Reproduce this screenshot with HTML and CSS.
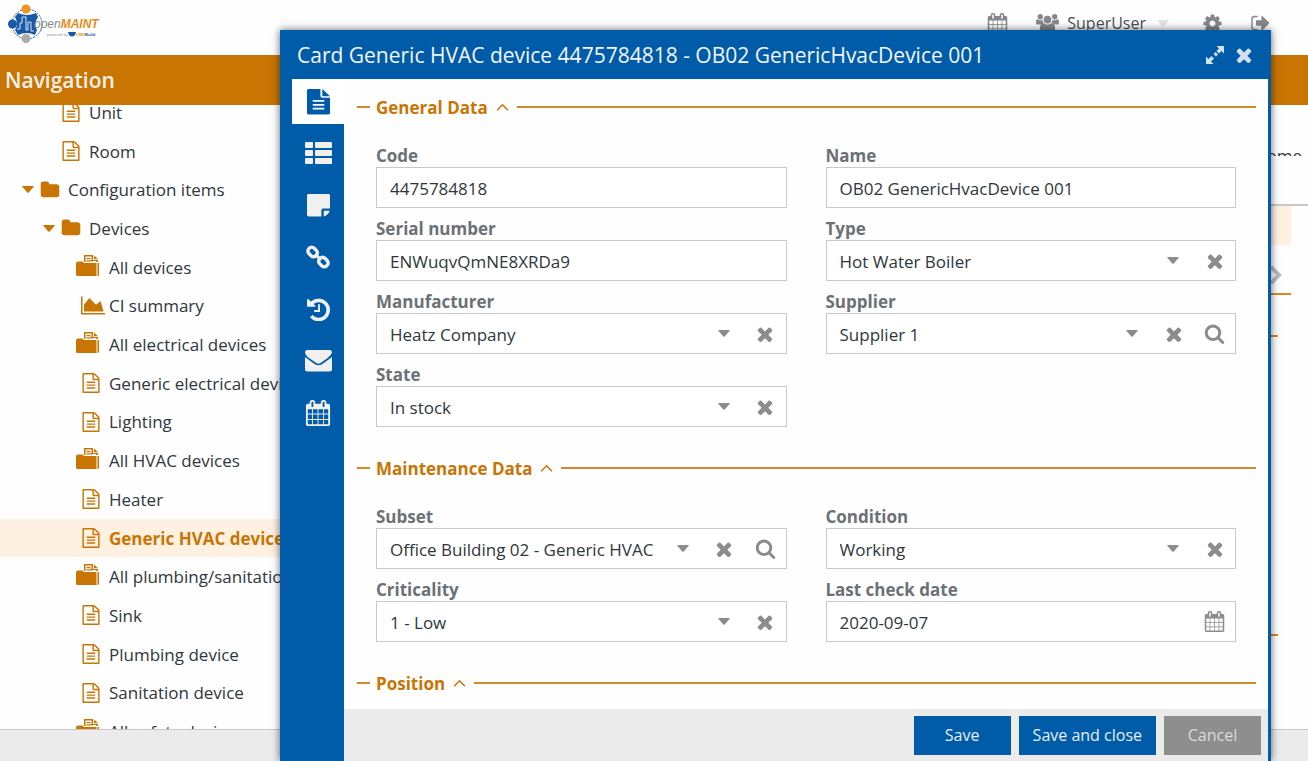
FILE: index.html
```html
<!DOCTYPE html>
<html lang="en">
<head>
  <meta charset="UTF-8" />
  <title>openMAINT</title>
  <link rel="stylesheet" href="styles.css">
</head>
<body>
  <svg class="sprite" aria-hidden="true">
    <symbol id="i-doc" viewBox="0 0 1792 1792"><path d="M1596 380q28 28 48 76t20 88v1152q0 40-28 68t-68 28h-1344q-40 0-68-28t-28-68v-1600q0-40 28-68t68-28h896q40 0 88 20t76 48zm-444-244v376h376q-10-29-22-41l-313-313q-12-12-41-22zm384 1528v-1024h-416q-40 0-68-28t-28-68v-416h-768v1536h1280zm-1024-864q0-14 9-23t23-9h704q14 0 23 9t9 23v64q0 14-9 23t-23 9h-704q-14 0-23-9t-9-23v-64zm736 224q14 0 23 9t9 23v64q0 14-9 23t-23 9h-704q-14 0-23-9t-9-23v-64q0-14 9-23t23-9h704zm0 256q14 0 23 9t9 23v64q0 14-9 23t-23 9h-704q-14 0-23-9t-9-23v-64q0-14 9-23t23-9h704z"/></symbol>
    <symbol id="i-folder" viewBox="0 0 1792 1792"><path d="M1728 608v704q0 92-66 158t-158 66h-1216q-92 0-158-66t-66-158v-960q0-92 66-158t158-66h320q92 0 158 66t66 158v32h672q92 0 158 66t66 158z"/></symbol>
    <symbol id="i-superclass" viewBox="0 0 24 22"><path d="M0 8.500q0-2 2-2h4q1.500 0 1.700 1.500h12.800v13h-19q-1.500 0-1.500-1.500zM21.500 8h1.500v12q0 1-1.500 1zM8 7v-7h9v5h5v2h-1.800v-1h-4.700v-4.500h-6v5.500zM10.500 3h4v1.200h-4zM10.500 5.300h6.500v1.200h-6.500zM18 .5l4 3.800h-4z"/></symbol>
    <symbol id="i-chart" viewBox="0 0 2048 1792"><path d="M2048 1536v128h-2048v-1536h128v1408h1920zm-384-1024l256 896h-1664v-576l448-576 576 576z"/></symbol>
    <symbol id="i-times" viewBox="0 0 1792 1792"><path d="M1490 1322q0 40-28 68l-136 136q-28 28-68 28t-68-28l-294-294-294 294q-28 28-68 28t-68-28l-136-136q-28-28-28-68t28-68l294-294-294-294q-28-28-28-68t28-68l136-136q28-28 68-28t68 28l294 294 294-294q28-28 68-28t68 28l136 136q28 28 28 68t-28 68l-294 294 294 294q28 28 28 68z"/></symbol>
    <symbol id="i-search" viewBox="0 0 1792 1792"><path d="M1216 832q0-185-131.500-316.500t-316.500-131.500-316.500 131.500-131.500 316.500 131.500 316.500 316.500 131.500 316.500-131.500 131.500-316.500zm512 832q0 52-38 90t-90 38q-54 0-90-38l-343-342q-179 124-399 124-143 0-273.500-55.500t-225-150-150-225-55.500-273.500 55.500-273.500 150-225 225-150 273.500-55.500 273.500 55.500 225 150 150 225 55.500 273.500q0 220-124 399l343 343q37 37 37 90z"/></symbol>
    <symbol id="i-calendar" viewBox="0 0 1792 1792"><path d="M192 1664h288v-288h-288v288zm352 0h320v-288h-320v288zm-352-352h288v-320h-288v320zm352 0h320v-320h-320v320zm-352-384h288v-288h-288v288zm736 736h320v-288h-320v288zm-384-736h320v-288h-320v288zm768 736h288v-288h-288v288zm-384-352h320v-320h-320v320zm-352-864v-288q0-13-9.500-22.500t-22.500-9.500h-64q-13 0-22.500 9.500t-9.500 22.500v288q0 13 9.500 22.500t22.500 9.500h64q13 0 22.500-9.500t9.500-22.500zm736 864h288v-320h-288v320zm-384-384h320v-288h-320v288zm384 0h288v-288h-288v288zm32-480v-288q0-13-9.500-22.500t-22.500-9.500h-64q-13 0-22.500 9.500t-9.500 22.500v288q0 13 9.500 22.500t22.500 9.500h64q13 0 22.500-9.500t9.500-22.500zm384-64v1280q0 52-38 90t-90 38h-1408q-52 0-90-38t-38-90v-1280q0-52 38-90t90-38h128v-96q0-66 47-113t113-47h64q66 0 113 47t47 113v96h384v-96q0-66 47-113t113-47h64q66 0 113 47t47 113v96h128q52 0 90 38t38 90z"/></symbol>
    <symbol id="i-cog" viewBox="0 0 1792 1792"><path d="M1152 896q0-106-75-181t-181-75-181 75-75 181 75 181 181 75 181-75 75-181zm512-109v222q0 12-8 23t-20 13l-185 28q-19 54-39 91 35 50 107 138 10 12 10 25t-9 23q-27 37-99 108t-94 71q-12 0-26-9l-138-108q-44 23-91 38-16 136-29 186-7 28-36 28h-222q-14 0-24.500-8.500t-11.500-21.500l-28-184q-49-16-90-37l-141 107q-10 9-25 9-14 0-25-11-126-114-165-168-7-10-7-23 0-12 8-23 15-21 51-66.500t54-70.500q-27-50-41-99l-183-27q-13-2-21-12.500t-8-23.500v-222q0-12 8-23t19-13l186-28q14-46 39-92-40-57-107-138-10-12-10-24 0-10 9-23 26-36 98.500-107.500t94.500-71.500q13 0 26 10l138 107q44-23 91-38 16-136 29-186 7-28 36-28h222q14 0 24.500 8.500t11.500 21.500l28 184q49 16 90 37l142-107q9-9 24-9 13 0 25 10 129 119 165 170 7 8 7 22 0 12-8 23-15 21-51 66.500t-54 70.500q26 50 41 98l183 28q13 2 21 12.500t8 23.500z"/></symbol>
    <symbol id="i-users" viewBox="0 0 24 20"><circle cx="4.500" cy="3.500" r="2.800"/><circle cx="19.500" cy="3.500" r="2.800"/><circle cx="12" cy="6.500" r="4"/><path d="M1 11.500q-1 0-1-2 0-3.500 1.500-3.500 2.500 1.500 5.500.8 0 2.500 1 3.700-2 0-3 1zM23 11.500q1 0 1-2 0-3.500-1.500-3.500-2.500 1.500-5.500.8 0 2.500-1 3.700 2 0 3 1zM7 19q-3 0-3-2.500 0-6.500 4-6.500 2 1.600 4 1.600t4-1.600q4 0 4 6.500 0 2.500-3 2.500z"/></symbol>
    <symbol id="i-signout" viewBox="0 0 20 18"><path d="M7 1.500h-3.500q-2.500 0-2.500 2.500v9q0 2.500 2.500 2.500h3.500" fill="none" stroke="currentColor" stroke-width="1.500"/><path d="M6 5.500h5v-4q0-1 1-.5l7 7q.6.600 0 1.200l-7 6.800q-1 .6-1-.5v-4h-5q-.8 0-.8-.8v-4.400q0-.8.8-.8z"/></symbol>
    <symbol id="i-card" viewBox="0 0 24 27"><path fill-rule="evenodd" d="M2 0h12v7q0 2 2 2h8v16q0 1.500-1.500 1.500h-21q-1.500 0-1.500-1.500v-23.500q0-1.500 2-1.500zM16 0l8 7.500h-8zM6 11.500v1.800h12v-1.800zM6 15.500v1.800h12v-1.800zM6 19.500v1.800h12v-1.800z"/></symbol>
    <symbol id="i-list" viewBox="0 0 27 22"><rect width="8" height="6" rx="1"/><rect x="10" width="17" height="6" rx="1"/><rect y="8" width="8" height="6" rx="1"/><rect x="10" y="8" width="17" height="6" rx="1"/><rect y="16" width="8" height="6" rx="1"/><rect x="10" y="16" width="17" height="6" rx="1"/></symbol>
    <symbol id="i-note" viewBox="0 0 24 24"><path d="M1.500 0h21q1.500 0 1.500 1.500v13.500h-7q-2 0-2 2v6.500h-13.500q-1.500 0-1.500-1.500v-20.500q0-1.500 1.500-1.500zM17.500 17.500h6q0 1.500-1.500 3l-1.500 1.500q-1.500 1.500-3 1.500z"/></symbol>
    <symbol id="i-link" viewBox="0 0 24 24"><g fill="none" stroke="currentColor" stroke-width="3.400"><rect x="-5" y="-3.500" width="10" height="7.500" rx="3.500" transform="translate(6.800 6.800) rotate(45)"/><rect x="-5" y="-4" width="10" height="7.500" rx="3.500" transform="translate(17.200 17.200) rotate(45)"/><path d="M9 9l6 6" stroke-width="3"/></g></symbol>
    <symbol id="i-history" viewBox="0 0 24 24"><path d="M4.500 6A10 10 0 1 1 4.500 19" fill="none" stroke="currentColor" stroke-width="3.700"/><path d="M0 1.500q.5-1 1.500-.2l7 6.500q.6 1.200-.6 1.400h-7q-1 0-1-1z"/><path d="M12.500 6.500v7h-5" fill="none" stroke="currentColor" stroke-width="2"/></symbol>
    <symbol id="i-mail" viewBox="0 0 27 22"><path d="M2.500 0h22q2.500 0 2.500 2.500-1 3-4 5.300l-7 5q-2.500 1.700-5 0l-8-5.600q-2.600-2-3-4.700 0-2.500 2.500-2.500zM0 7l9.500 7q4 2.600 8 0l9.500-7v12.500q0 2-2.500 2h-22q-2.500 0-2.500-2z"/></symbol>
    <symbol id="i-expand" viewBox="0 0 18 18"><path d="M10.500 0h7.500v7.500l-2.500-2.500-2.500 2.500-2.500-2.500 2.500-2.500zM9.500 6l2.500 2.500-2 2-2.500-2.500zM7.500 18h-7.500v-7.500l2.500 2.500 3-3 2.500 2.500-3 3z"/></symbol>
    <symbol id="i-down" viewBox="0 0 12 7"><path d="M.5 0h11q.5.300.2.700l-5 5.800q-.7.700-1.400 0l-5-5.800q-.3-.4.200-.7z"/></symbol>
    <symbol id="i-up" viewBox="0 0 12 7"><path d="M1 6.500l5-5 5 5" fill="none" stroke="currentColor" stroke-width="1.400"/></symbol>
  </svg>

  <header class="topbar">
    <a href="#" class="logo" aria-label="openMAINT">
      <svg width="92" height="40" viewBox="0 0 92 40">
        <circle cx="19" cy="20" r="15" fill="none" stroke="#1f5fa8" stroke-width="1" stroke-dasharray="2 1"/>
        <path d="M10 9q9 4 18 0l2 4q-5 7-1 13l-2 5q-8-4-17 0l-3-5q4-6 0-13z" fill="#1759a5"/>
        <path d="M9 25h3v-6h2v-6h4v13h2v-8h3v9h3" fill="none" stroke="#dce8f5" stroke-width="1"/>
        <circle cx="18" cy="5" r="4.500" fill="#ec951f"/>
        <circle cx="4.500" cy="20" r="4.500" fill="#1759a5"/>
        <circle cx="18" cy="34.500" r="4.500" fill="#ababab"/>
        <text x="26" y="24" class="logo-text"><tspan fill="#8d8d8d">open</tspan><tspan fill="#e88d18" font-weight="bold">MAINT</tspan></text>
        <text x="39" y="32" class="logo-small" fill="#999">powered by</text>
        <path d="M60 28h8l-1 3q-3 3-6 0z" fill="#1759a5"/>
        <text x="68" y="32" class="logo-small" font-weight="bold"><tspan fill="#e88d18">CMD</tspan><tspan fill="#1759a5">Build</tspan></text>
      </svg>
    </a>
    <nav class="tools">
      <button aria-label="Calendar"><svg width="21" height="21"><use href="#i-calendar"/></svg></button>
      <button class="user"><svg width="23" height="20"><use href="#i-users"/></svg>SuperUser<svg class="user-arrow" width="12" height="7"><use href="#i-down"/></svg></button>
      <button class="settings" aria-label="Settings"><svg width="21" height="21"><use href="#i-cog"/></svg></button>
      <button aria-label="Log out"><svg width="19" height="17"><use href="#i-signout"/></svg></button>
    </nav>
  </header>

  <div class="workspace">
    <aside class="nav">
      <h1 class="bar">Navigation</h1>
      <div class="tree-box">
        <ul class="tree">
          <li class="d2"><a href="#"><svg><use href="#i-doc"/></svg>Unit</a></li>
          <li class="d2"><a href="#"><svg><use href="#i-doc"/></svg>Room</a></li>
          <li class="d1 open"><a href="#"><svg class="arrow"><use href="#i-down"/></svg><svg><use href="#i-folder"/></svg>Configuration items</a></li>
          <li class="d2 open"><a href="#"><svg class="arrow"><use href="#i-down"/></svg><svg><use href="#i-folder"/></svg>Devices</a></li>
          <li class="d3"><a href="#"><svg class="super"><use href="#i-superclass"/></svg>All devices</a></li>
          <li class="d3"><a href="#"><svg class="chart"><use href="#i-chart"/></svg>CI summary</a></li>
          <li class="d3"><a href="#"><svg class="super"><use href="#i-superclass"/></svg>All electrical devices</a></li>
          <li class="d3"><a href="#"><svg><use href="#i-doc"/></svg>Generic electrical device</a></li>
          <li class="d3"><a href="#"><svg><use href="#i-doc"/></svg>Lighting</a></li>
          <li class="d3"><a href="#"><svg class="super"><use href="#i-superclass"/></svg>All HVAC devices</a></li>
          <li class="d3"><a href="#"><svg><use href="#i-doc"/></svg>Heater</a></li>
          <li class="d3 selected"><a href="#"><svg><use href="#i-doc"/></svg>Generic HVAC device</a></li>
          <li class="d3"><a href="#"><svg class="super"><use href="#i-superclass"/></svg>All plumbing/sanitation</a></li>
          <li class="d3"><a href="#"><svg><use href="#i-doc"/></svg>Sink</a></li>
          <li class="d3"><a href="#"><svg><use href="#i-doc"/></svg>Plumbing device</a></li>
          <li class="d3"><a href="#"><svg><use href="#i-doc"/></svg>Sanitation device</a></li>
          <li class="d3"><a href="#"><svg class="super"><use href="#i-superclass"/></svg>All safety devices</a></li>
        </ul>
      </div>
    </aside>
    <main class="content">
      <div class="bar"></div>
      <div class="grid-head"><span>ome</span></div>
      <div class="grid-row"></div>
      <div class="grid-card">
        <div class="grid-tools"><svg width="14" height="20" viewBox="0 0 14 20"><path d="M3 2l8 8-8 8" fill="none" stroke="#bbb" stroke-width="4"/></svg></div>
        <div class="grid-group"></div>
        <div class="grid-group tall"></div>
      </div>
    </main>
  </div>
  <footer class="statusbar"></footer>

  <section class="window" role="dialog" aria-labelledby="win-title">
    <div class="win-head">
      <h2 id="win-title">Card Generic HVAC device 4475784818 - OB02 GenericHvacDevice 001</h2>
      <button aria-label="Maximize"><svg width="18" height="18"><use href="#i-expand"/></svg></button>
      <button aria-label="Close"><svg width="22" height="22"><use href="#i-times"/></svg></button>
    </div>
    <div class="win-body">
      <div class="tabs">
        <button class="active" aria-label="Card"><svg width="23" height="26"><use href="#i-card"/></svg></button>
        <button aria-label="Details"><svg width="27" height="22"><use href="#i-list"/></svg></button>
        <button aria-label="Notes"><svg width="23" height="23"><use href="#i-note"/></svg></button>
        <button aria-label="Relations"><svg width="24" height="24"><use href="#i-link"/></svg></button>
        <button aria-label="History"><svg width="23" height="23"><use href="#i-history"/></svg></button>
        <button aria-label="Emails"><svg width="27" height="22"><use href="#i-mail"/></svg></button>
        <button aria-label="Schedules"><svg width="26" height="26"><use href="#i-calendar"/></svg></button>
      </div>
      <form class="card">
        <div class="card-scroll">
          <section class="group">
            <h3>General Data<svg width="13" height="8"><use href="#i-up"/></svg></h3>
            <div class="fields">
              <div class="field">
                <label for="code">Code</label>
                <div class="control"><input id="code" type="text" value="4475784818"></div>
              </div>
              <div class="field">
                <label for="name">Name</label>
                <div class="control"><input id="name" type="text" value="OB02 GenericHvacDevice 001"></div>
              </div>
              <div class="field">
                <label for="serial">Serial number</label>
                <div class="control"><input id="serial" type="text" value="ENWuqvQmNE8XRDa9"></div>
              </div>
              <div class="field">
                <label for="type">Type</label>
                <div class="control">
                  <div class="pick"><select id="type"><option>Hot Water Boiler</option></select><svg><use href="#i-down"/></svg></div>
                  <button type="button" aria-label="Clear"><svg width="22" height="22"><use href="#i-times"/></svg></button>
                </div>
              </div>
              <div class="field">
                <label for="manufacturer">Manufacturer</label>
                <div class="control">
                  <div class="pick"><select id="manufacturer"><option>Heatz Company</option></select><svg><use href="#i-down"/></svg></div>
                  <button type="button" aria-label="Clear"><svg width="22" height="22"><use href="#i-times"/></svg></button>
                </div>
              </div>
              <div class="field">
                <label for="supplier">Supplier</label>
                <div class="control">
                  <div class="pick"><select id="supplier"><option>Supplier 1</option></select><svg><use href="#i-down"/></svg></div>
                  <button type="button" aria-label="Clear"><svg width="22" height="22"><use href="#i-times"/></svg></button>
                  <button type="button" aria-label="Search"><svg width="21" height="21"><use href="#i-search"/></svg></button>
                </div>
              </div>
              <div class="field">
                <label for="state">State</label>
                <div class="control">
                  <div class="pick"><select id="state"><option>In stock</option></select><svg><use href="#i-down"/></svg></div>
                  <button type="button" aria-label="Clear"><svg width="22" height="22"><use href="#i-times"/></svg></button>
                </div>
              </div>
            </div>
          </section>

          <section class="group">
            <h3>Maintenance Data<svg width="13" height="8"><use href="#i-up"/></svg></h3>
            <div class="fields">
              <div class="field">
                <label for="subset">Subset</label>
                <div class="control">
                  <div class="pick"><select id="subset"><option>Office Building 02 - Generic HVAC</option></select><svg><use href="#i-down"/></svg></div>
                  <button type="button" aria-label="Clear"><svg width="22" height="22"><use href="#i-times"/></svg></button>
                  <button type="button" aria-label="Search"><svg width="21" height="21"><use href="#i-search"/></svg></button>
                </div>
              </div>
              <div class="field">
                <label for="condition">Condition</label>
                <div class="control">
                  <div class="pick"><select id="condition"><option>Working</option></select><svg><use href="#i-down"/></svg></div>
                  <button type="button" aria-label="Clear"><svg width="22" height="22"><use href="#i-times"/></svg></button>
                </div>
              </div>
              <div class="field">
                <label for="criticality">Criticality</label>
                <div class="control">
                  <div class="pick"><select id="criticality"><option>1 - Low</option></select><svg><use href="#i-down"/></svg></div>
                  <button type="button" aria-label="Clear"><svg width="22" height="22"><use href="#i-times"/></svg></button>
                </div>
              </div>
              <div class="field">
                <label for="lastcheck">Last check date</label>
                <div class="control">
                  <input id="lastcheck" type="text" value="2020-09-07">
                  <button type="button" aria-label="Pick date"><svg width="21" height="21"><use href="#i-calendar"/></svg></button>
                </div>
              </div>
            </div>
          </section>

          <section class="group">
            <h3>Position<svg width="13" height="8"><use href="#i-up"/></svg></h3>
          </section>
        </div>
        <div class="actions">
          <button type="button">Save</button>
          <button type="button">Save and close</button>
          <button type="button" class="cancel">Cancel</button>
        </div>
      </form>
    </div>
  </section>
</body>
</html>
```
FILE: styles.css
```css
* { box-sizing: border-box; }
body {
  margin: 0;
  height: 100vh;
  display: flex;
  flex-direction: column;
  overflow: hidden;
  font-family: "Open Sans", "Noto Sans", sans-serif;
  font-size: 17px;
  color: #30363d;
  background: #fefefe;
}
h1, h2, h3, ul { margin: 0; padding: 0; }
button, input, select { font: inherit; color: inherit; }
button { border: 0; padding: 0; background: none; cursor: pointer; }
svg { fill: currentColor; flex: none; display: block; }
.sprite { position: absolute; width: 0; height: 0; }

/* top bar */
.topbar {
  flex: none;
  height: 55px;
  display: flex;
  justify-content: space-between;
  padding: 4px 38px 0 8px;
}
.logo { color: inherit; }
.logo-text { font: italic 12px "Liberation Sans", sans-serif; }
.logo-small { font-family: "Liberation Sans", sans-serif; font-size: 4px; }
.tools {
  display: flex;
  align-items: center;
  gap: 28px;
  height: 38px;
  font-size: 16px;
  color: #85878b;
}
.tools button { display: flex; align-items: center; }
.tools .user { gap: 8px; color: #4a4f56; }
.tools .settings { margin-left: 5px; }
.user svg { color: #85878b; }
.user .user-arrow { color: #e4e4e4; margin-left: 3px; }

/* background page */
.workspace { flex: 1; min-height: 0; display: flex; }
.nav { width: 300px; display: flex; flex-direction: column; }
.content { flex: 1; display: flex; flex-direction: column; }
.bar {
  flex: none;
  height: 50px;
  padding-left: 5px;
  line-height: 50px;
  font-size: 21px;
  font-weight: 600;
  color: #f5f0ea;
  background: #c87504;
}
.tree-box { flex: 1; min-height: 0; overflow: hidden; }
.tree {
  list-style: none;
  display: flex;
  flex-direction: column;
  height: calc(100% + 34px);
  margin-top: -12px;
}
.tree li { flex: 1; }
.tree a {
  height: 100%;
  display: flex;
  align-items: center;
  gap: 8px;
  white-space: nowrap;
  color: inherit;
  text-decoration: none;
}
.tree svg { width: 20px; height: 20px; color: #c87504; }
.tree .arrow { width: 12px; height: 7px; margin-right: -2px; }
.tree .super { width: 24px; height: 22px; margin: -3px 1px 0 -5px; }
.tree .chart { width: 24px; height: 21px; margin-right: -4px; }
.d2 { padding-left: 61px; }
.d3 { padding-left: 81px; }
.d1.open { padding-left: 22px; }
.d2.open { padding-left: 43px; }
.selected { background: #fef1e2; color: #c87504; font-weight: bold; }

.grid-head {
  height: 101px;
  border-bottom: 2px solid #c8c8c8;
  text-align: right;
  padding: 47px 6px 0 0;
}
.grid-head span { display: block; height: 4px; line-height: 7px; overflow: hidden; }
.grid-row { height: 39px; margin-right: 17px; background: #fef1e2; }
.grid-card { margin-right: 17px; }
.grid-tools {
  height: 50px;
  display: flex;
  justify-content: flex-end;
  align-items: center;
  padding: 12px 9px 0 0;
  border-bottom: 2px solid #d98a22;
}
.grid-group { height: 42px; margin-right: 13px; border-bottom: 2px solid #d98a22; }
.grid-group.tall { height: 299px; }
.statusbar { flex: none; height: 32px; border-top: 1px solid #c6c6c6; background: #ebebeb; }

/* card window over the page */
.window {
  position: absolute;
  inset: 30px 37px 0 280px;
  display: flex;
  flex-direction: column;
  background: #005ca9;
  box-shadow: 0 0 8px rgba(0, 0, 0, .6);
}
.win-head {
  flex: none;
  height: 49px;
  display: flex;
  align-items: center;
  gap: 9px;
  padding: 0 16px 0 17px;
  color: #d3e0f1;
}
.win-head h2 { flex: 1; font-size: 21px; font-weight: 500; color: #f3f5f8; white-space: nowrap; }
.win-body { flex: 1; min-height: 0; display: flex; padding: 0 3px 0 12px; }
.tabs { width: 52px; display: flex; flex-direction: column; gap: 6px; color: #f0f0f0; }
.tabs button { height: 46px; display: flex; align-items: center; justify-content: center; }
.tabs .active { height: 45px; background: #fff; color: #005ca9; }
.card { flex: 1; min-width: 0; display: flex; flex-direction: column; background: #fefefe; }
.card-scroll { flex: 1; min-height: 0; overflow: hidden; padding: 16px 12px 0 13px; }
.group { margin-bottom: 29px; }
.group h3 {
  display: flex;
  align-items: center;
  gap: 6px;
  height: 24px;
  font-size: 17px;
  color: #c87504;
}
.group h3::before, .group h3::after { content: ""; width: 13px; height: 2px; background: #d28a2c; }
.group h3::after { flex: 1; margin-left: 2px; }
.group h3 svg { margin-left: 2px; }
.fields {
  display: grid;
  grid-template-columns: 1fr 1fr;
  column-gap: 39px;
  padding: 16px 20px 0 19px;
}
.field label {
  display: block;
  height: 32px;
  padding-top: 9px;
  line-height: 23px;
  font-weight: bold;
  color: #6c7176;
}
.control { height: 41px; display: flex; border: 1px solid #c9c9c9; background: #fff; }
.control input, .control select {
  flex: 1;
  width: 100%;
  min-width: 0;
  padding: 2px 0 0 13px;
  border: 0;
  outline: 0;
  background: none;
  appearance: none;
}
.control button { width: 41px; display: flex; align-items: center; justify-content: center; color: #8c8c8c; }
.pick { flex: 1; min-width: 0; display: flex; align-items: center; color: #30363d; }
.pick select { height: 100%; }
.pick svg { width: 12px; height: 7px; margin: 0 15px 0 14px; color: #8c8c8c; }
.actions {
  flex: none;
  display: flex;
  justify-content: flex-end;
  gap: 8px;
  padding: 7px 7px 6px;
  background: #ebebeb;
}
.actions button { height: 39px; min-width: 97px; padding: 0 14px 2px; font-size: 16px; color: #e8eef5; background: #005ca9; }
.actions .cancel { background: #8e8e8e; color: #dadada; }
```
